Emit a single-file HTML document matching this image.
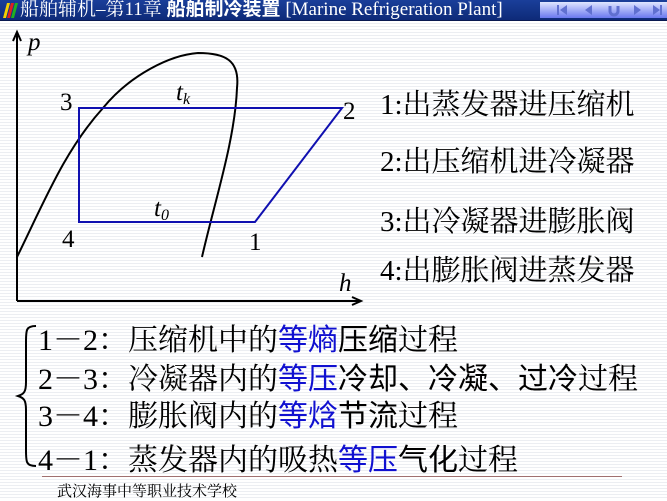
<!DOCTYPE html>
<html><head><meta charset="utf-8"><style>
html,body{margin:0;padding:0}
body{width:667px;height:500px;position:relative;overflow:hidden;background:repeating-linear-gradient(#fff 0,#fff 2px,#eceef2 2px,#eceef2 3px);font-family:"Liberation Serif","Noto Serif CJK SC",serif;}
.hdr{position:absolute;left:0;top:0;width:667px;height:20px;background:linear-gradient(#1a3f9a,#0e2a78);border-bottom:1px solid #081850}
.hdr .t{position:absolute;left:20px;top:-1px;font-size:19px;line-height:22px;color:#fff;white-space:nowrap}
.nav{position:absolute;left:540px;top:2px;width:127px;height:16px;background:linear-gradient(#dfe6ff,#6a78f0);}
.ab{position:absolute;white-space:nowrap;color:#000}
.r{font-size:29px;left:380px}
.l{font-size:30px;left:38px}
.b{color:#1010d0;font-family:"Liberation Sans","Noto Sans CJK SC",sans-serif}
.k{font-family:"Liberation Sans","Noto Sans CJK SC",sans-serif}
</style></head><body>
<div class="hdr">
 <svg style="position:absolute;left:3px;top:3px" width="16" height="15"><polygon points="0,15 4,0 7,0 3,15" fill="#f5d000"/><polygon points="4,15 8,0 11,0 7,15" fill="#e02020"/><polygon points="8,15 12,0 15,0 11,15" fill="#20b020"/></svg>
 <div class="t">船舶辅机–第11章 <b class="k">船舶制冷装置</b> [Marine Refrigeration Plant]</div>
 <div class="nav"><svg width="127" height="16" fill="#6070d0"><polygon points="20,8 27,3 27,13"/><rect x="17" y="3" width="2" height="10"/><polygon points="45,8 52,3 52,13"/><path d="M70 4v5a4 4 0 0 0 8 0V4" stroke="#6070d0" stroke-width="3" fill="none"/><polygon points="101,8 94,3 94,13"/><polygon points="120,8 113,3 113,13"/><rect x="120" y="3" width="2" height="10"/></svg></div>
</div>
<svg style="position:absolute;left:0;top:0" width="370" height="310">
 <g stroke="#000" stroke-width="2" fill="none">
  <path d="M17 301V33M17 301H360"/>
  <path d="M13 41L17 32L21 41M352 297L361 301L352 305"/>
  <path d="M17 257C45 200 65 150 103 108C130 75 170 55 198 53C225 53 240 60 237 88C235 140 215 200 202 257"/>
 </g>
 <path d="M79 108H342L255 222H79Z" stroke="#1010b0" stroke-width="2" fill="none"/>
 <g font-size="25" font-family="Liberation Serif">
  <text x="60" y="110">3</text><text x="343" y="119">2</text><text x="62" y="247">4</text><text x="249" y="250">1</text>
  <text x="176" y="100" font-style="italic">t<tspan font-size="16" dy="4">k</tspan></text>
  <text x="154" y="216" font-style="italic">t<tspan font-size="16" dy="4">0</tspan></text>
  <text x="28" y="50" font-style="italic">p</text><text x="339" y="291" font-style="italic">h</text>
 </g>
</svg>
<div class="ab r" style="top:82px">1:出蒸发器进压缩机</div>
<div class="ab r" style="top:139px">2:出压缩机进冷凝器</div>
<div class="ab r" style="top:199px">3:出冷凝器进膨胀阀</div>
<div class="ab r" style="top:248px">4:出膨胀阀进蒸发器</div>
<svg style="position:absolute;left:14px;top:322px" width="26" height="150"><path d="M22 4C12 4 12 8 12 20V60C12 70 10 72 4 74C10 76 12 78 12 88V128C12 140 12 144 22 144" stroke="#000" stroke-width="2" fill="none"/></svg>
<div class="ab l" style="top:315px">1－2：压缩机中的<span class="b">等熵</span><span class="k">压缩</span>过程</div>
<div class="ab l" style="top:354px">2－3：冷凝器内的<span class="b">等压</span><span class="k">冷却、冷凝、过冷</span>过程</div>
<div class="ab l" style="top:391px">3－4：膨胀阀内的<span class="b">等焓</span><span class="k">节流</span>过程</div>
<div class="ab l" style="top:435px">4－1：蒸发器内的吸热<span class="b">等压</span><span class="k">气化</span>过程</div>
<div style="position:absolute;left:42px;top:476px;width:580px;height:1px;background:#a07070"></div>
<div class="ab" style="left:57px;top:480px;font-size:15px">武汉海事中等职业技术学校</div>
</body></html>
